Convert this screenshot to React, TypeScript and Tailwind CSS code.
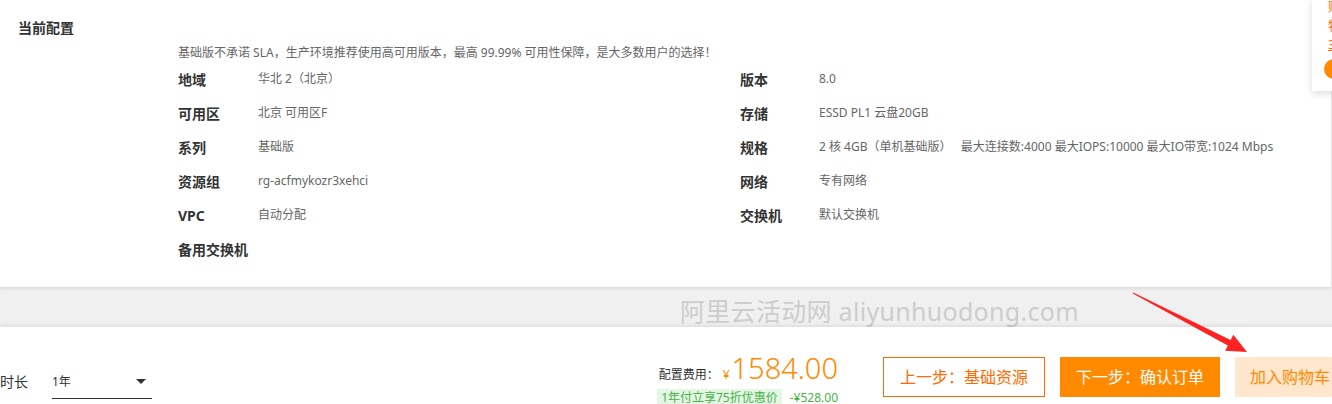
import React from 'react';

const leftRows = [
  { label: '地域', value: '华北 2（北京）' },
  { label: '可用区', value: '北京 可用区F' },
  { label: '系列', value: '基础版' },
  { label: '资源组', value: 'rg-acfmykozr3xehci' },
  { label: 'VPC', value: '自动分配' },
  { label: '备用交换机', value: '' },
];

const rightRows = [
  { label: '版本', value: '8.0' },
  { label: '存储', value: 'ESSD PL1 云盘20GB' },
  { label: '规格', value: '2 核 4GB（单机基础版）\u00a0\u00a0\u00a0最大连接数:4000 最大IOPS:10000 最大IO带宽:1024 Mbps' },
  { label: '网络', value: '专有网络' },
  { label: '交换机', value: '默认交换机' },
];

const Row: React.FC<{ label: string; value: string; labelWidth: string }> = ({ label, value, labelWidth }) => (
  <div className="flex h-[34px] items-center">
    <div className={`${labelWidth} text-[14px] font-bold text-[#333]`}>{label}</div>
    <div className="text-[12px] text-[#666]">{value}</div>
  </div>
);

const App: React.FC = () => {
  return (
    <div className="relative h-[404px] w-[1332px] overflow-hidden bg-[#f0f0f0] font-['Noto_Sans','Noto_Sans_CJK_SC',sans-serif]">
      {/* current config card */}
      <div className="relative z-10 h-[287px] w-[1332px] border-r border-[#e4e4e4] bg-white shadow-[0_1px_4px_rgba(0,0,0,0.12)]">
        <div className="pl-[18px] pt-[18px] text-[14px] font-bold leading-[20px] text-[#333]">当前配置</div>
        <div className="pl-[178px]">
          <p className="mt-[6px] text-[12px] leading-[18px] text-[#666]">
            基础版不承诺 SLA，生产环境推荐使用高可用版本，最高 99.99% 可用性保障，是大多数用户的选择！
          </p>
          <div className="flex">
            <div className="w-[562px]">
              {leftRows.map((r, i) => (
                <Row key={i} label={r.label} value={r.value} labelWidth="w-[80px]" />
              ))}
            </div>
            <div>
              {rightRows.map((r, i) => (
                <Row key={i} label={r.label} value={r.value} labelWidth="w-[79px]" />
              ))}
            </div>
          </div>
        </div>
      </div>

      {/* gray strip with watermark */}
      <div className="relative h-[40px]">
        <div className="absolute left-[680px] top-[9px] whitespace-nowrap text-[25px] leading-[30px] tracking-[0.3px] text-[#cdcdcd]">
          阿里云活动网 aliyunhuodong.com
        </div>
      </div>

      {/* bottom bar */}
      <div className="relative z-10 flex h-[77px] w-[1345px] items-start bg-white shadow-[0_-1px_4px_rgba(0,0,0,0.1)]">
        <div className="mt-[45px] w-[52px] text-[14px] leading-[20px] text-[#333]">时长</div>
        <div className="mt-[45px] flex h-[27px] w-[100px] items-start justify-between border-b border-[#333] pr-[6px] pt-[2px]">
          <span className="text-[12px] leading-[16px] text-[#333]">1年</span>
          <svg width="10" height="6" viewBox="0 0 10 6" className="mt-[5px]">
            <polygon points="0,0 10,0 5,5" fill="#333" />
          </svg>
        </div>

        <div className="ml-auto mt-[23px] flex flex-col items-end">
          <div className="flex h-[36px] items-baseline">
            <span className="text-[12px] text-[#333]">配置费用：</span>
            <span className="ml-[4px] text-[12px] text-[#ff8a00]">¥</span>
            <span className="ml-[2px] text-[29px] font-light leading-[36px] text-[#ff8a00]">1584.00</span>
          </div>
          <div className="mt-[3px] flex items-center">
            <span className="bg-[#e4f6e4] px-[4px] text-[12px] leading-[18px] text-[#47b347]">1年付立享75折优惠价</span>
            <span className="ml-[8px] text-[12px] leading-[18px] text-[#47b347]">-¥528.00</span>
          </div>
        </div>

        <div className="ml-[45px] mt-[30px] flex gap-[15px]">
          <button className="h-[40px] w-[162px] border border-[#ff6a00] bg-white text-[16px] text-[#ff6a00]">
            上一步：基础资源
          </button>
          <button className="h-[40px] w-[160px] bg-[#ff8a00] text-[16px] text-white">下一步：确认订单</button>
          <button className="h-[40px] w-[110px] bg-[#ffe6cc] text-[16px] text-[#ff8a00]">加入购物车</button>
        </div>
      </div>

      {/* floating side panel, mostly off-screen */}
      <div className="absolute left-[1312px] top-0 z-20 h-[91px] w-[100px] bg-white pl-[16px] shadow-[0_2px_8px_rgba(0,0,0,0.15)]">
        <div className="-mt-[3px] text-[13px] leading-[19px] text-[#ff6a00]">
          <div>账单</div>
          <div>特惠</div>
          <div className="underline">3折起</div>
        </div>
        <div className="-ml-[4px] mt-[5px] h-[20px] w-[20px] rounded-full bg-[#ff8a00]" />
      </div>

      {/* red arrow annotation */}
      <svg className="pointer-events-none absolute left-0 top-0 z-30" width="1332" height="404">
        <polygon
          points="1133.2,292.6 1230.6,340.1 1233.3,334.8 1247,352 1225.1,350.8 1227.8,345.5 1132.8,293.4"
          fill="#ff2222"
        />
      </svg>
    </div>
  );
};

export default App;
